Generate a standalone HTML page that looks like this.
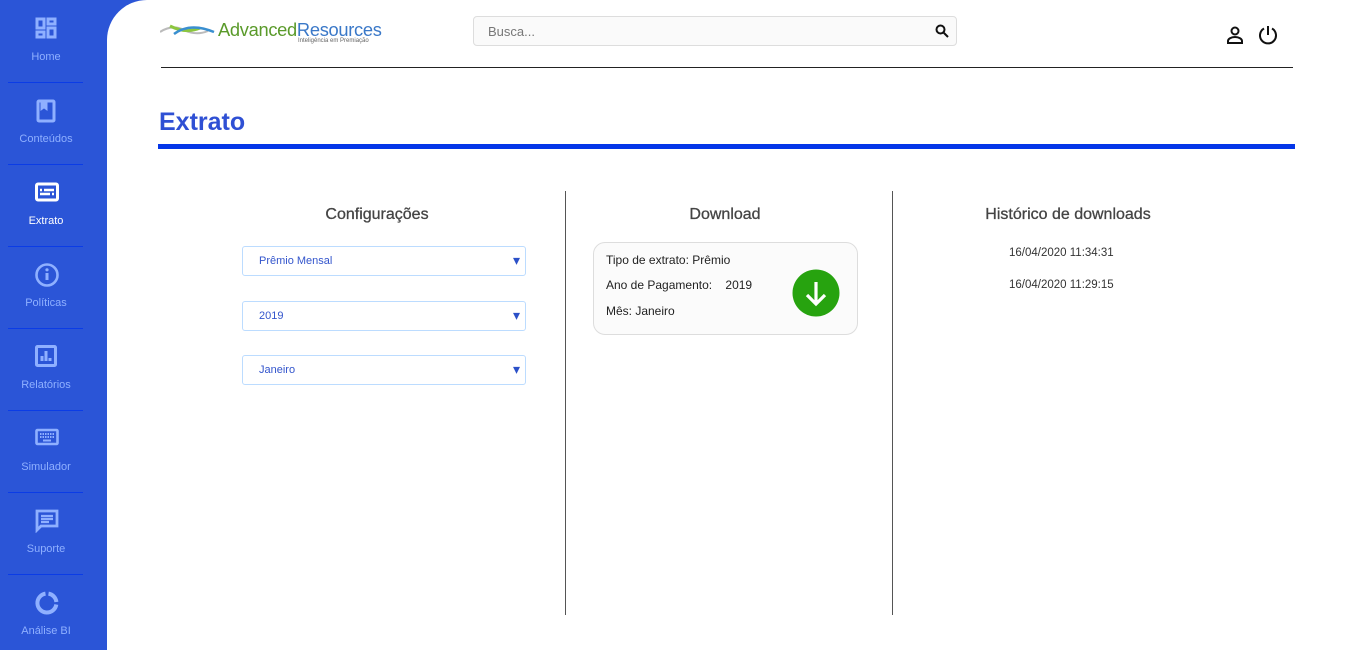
<!DOCTYPE html>
<html><head><meta charset="utf-8"><style>
*{margin:0;padding:0;box-sizing:border-box}
html,body{width:1358px;height:650px;overflow:hidden}
body{background:#2b55d7;font-family:"Liberation Sans",sans-serif;position:relative}
.side{position:absolute;left:0;top:0;width:107px;height:650px}
.item{position:absolute;left:0;width:92px;height:82px;text-align:center;color:#8fb0ff;font-size:11px}
.item svg{position:absolute;left:35px;top:17px}
.item span{position:absolute;left:0;width:92px;top:51px}
.item.act{color:#fff}
.sep{position:absolute;left:8px;width:75px;height:1px;background:#0b3ce6}
.main{position:absolute;left:107px;top:0;width:1251px;height:650px;background:#fff;border-top-left-radius:40px}
.abs{position:absolute}
.sel{position:absolute;left:242px;width:284px;height:30px;border:1px solid #bcdcff;border-radius:3px;color:#3355cc;font-size:11px;padding:8px 0 0 16px}
.sel:after{content:"▾";position:absolute;right:5px;top:5px;color:#2b50c8;font-size:14px}
h3{position:absolute;font-weight:normal;font-size:16px;color:#444;text-align:center;-webkit-text-stroke:0.3px #444}
</style></head><body>
<div class="side">
<div class="item" style="top:0"><svg width="22" height="22" viewBox="0 0 22 22" fill="none" stroke="#8fb0ff" stroke-width="3"><rect x="2" y="2" width="7" height="9"/><rect x="13" y="2" width="7" height="5"/><rect x="2" y="15" width="7" height="5"/><rect x="13" y="11" width="7" height="9"/></svg><span>Home</span></div>
<div class="sep" style="top:82px"></div>
<div class="item" style="top:82px"><svg width="22" height="24" viewBox="0 0 22 24" fill="none" stroke="#8fb0ff" stroke-width="3"><rect x="3" y="2" width="16" height="20" rx="1"/><path d="M7 2v7l2-1.5 2 1.5V2" fill="#8fb0ff"/></svg><span>Conteúdos</span></div>
<div class="sep" style="top:164px"></div>
<div class="item act" style="top:164px"><svg width="24" height="22" viewBox="0 0 24 22" fill="none" stroke="#fff" stroke-width="3"><rect x="1.5" y="3" width="21" height="16" rx="1.5"/><path d="M5 9h2M9 9h10M5 13h10M17 13h2" stroke-width="2.4"/></svg><span>Extrato</span></div>
<div class="sep" style="top:246px"></div>
<div class="item" style="top:246px"><svg width="24" height="24" viewBox="0 0 24 24" fill="none" stroke="#8fb0ff" stroke-width="2.6"><circle cx="12" cy="12" r="10.5"/><path d="M12 10v7" stroke-width="3"/><circle cx="12" cy="6.8" r="1.6" fill="#8fb0ff" stroke="none"/></svg><span>Políticas</span></div>
<div class="sep" style="top:328px"></div>
<div class="item" style="top:328px"><svg width="22" height="22" viewBox="0 0 22 22" fill="none" stroke="#8fb0ff" stroke-width="3"><rect x="1.5" y="1.5" width="19" height="19" rx="1"/><path d="M7 16v-5M11 16V6M15 16v-3" stroke-width="3"/></svg><span>Relatórios</span></div>
<div class="sep" style="top:410px"></div>
<div class="item" style="top:410px"><svg width="24" height="20" viewBox="0 0 24 20" fill="none" stroke="#8fb0ff" stroke-width="2.6"><rect x="1.5" y="3" width="21" height="14" rx="1"/><path d="M5 7h14M5 10h14" stroke-dasharray="1.5 1" stroke-width="2"/><path d="M8 13.5h8" stroke-width="2"/></svg><span>Simulador</span></div>
<div class="sep" style="top:492px"></div>
<div class="item" style="top:492px"><svg width="24" height="24" viewBox="0 0 24 24" fill="none" stroke="#8fb0ff" stroke-width="2.8"><path d="M2 2h20v15H6l-4 4z"/><path d="M6 7h12M6 10h12M6 13h8" stroke-width="2.2"/></svg><span>Suporte</span></div>
<div class="sep" style="top:574px"></div>
<div class="item" style="top:574px"><svg width="24" height="24" viewBox="0 0 24 24" fill="none" stroke="#8fb0ff" stroke-width="4"><path d="M13.5 2.6A9.5 9.5 0 0 1 21.4 11"/><path d="M21.3 13.5A9.5 9.5 0 1 1 10.5 2.6"/></svg><span>Análise BI</span></div>
</div>
<div class="main"></div>
<svg class="abs" style="left:160px;top:22px" width="62" height="16" viewBox="0 0 62 16"><path d="M0 10Q12 2 24 8T48 9" stroke="#bbb" stroke-width="2" fill="none"/><path d="M10 4Q26 12 40 6" stroke="#8cc63f" stroke-width="3" fill="none"/><path d="M14 12Q30 0 54 10" stroke="#3a8fd0" stroke-width="2.5" fill="none"/></svg>
<div class="abs" style="left:218px;top:19px;font-size:18.3px;color:#5a9a2a;letter-spacing:-0.3px">Advanced<span style="color:#3a78c8">Resources</span></div>
<div class="abs" style="left:298px;top:38px;font-size:6px;color:#666">Inteligência em Premiação</div>
<div class="abs" style="left:473px;top:16px;width:484px;height:30px;border:1px solid #ddd;border-radius:4px;background:#fafafa;font-size:13px;color:#777;padding:7px 0 0 14px">Busca...</div>
<svg class="abs" style="left:935px;top:24px" width="14" height="14" viewBox="0 0 14 14" fill="none" stroke="#111" stroke-width="2"><circle cx="5.5" cy="5.5" r="4"/><path d="M8.5 8.5L13 13"/></svg>
<svg class="abs" style="left:1226px;top:26px" width="18" height="18" viewBox="0 0 18 18" fill="none" stroke="#111" stroke-width="2"><circle cx="9" cy="5" r="3.5"/><path d="M2 17v-2c0-2 3-4 7-4s7 2 7 4v2z"/></svg>
<svg class="abs" style="left:1258px;top:25px" width="20" height="20" viewBox="0 0 20 20" fill="none" stroke="#111" stroke-width="2"><path d="M10 1v9"/><path d="M6 3.5A8 8 0 1 0 14 3.5"/></svg>
<div class="abs" style="left:161px;top:67px;width:1132px;height:1px;background:#222"></div>
<div class="abs" style="left:159px;top:108px;font-size:25px;font-weight:bold;color:#2f50d4">Extrato</div>
<div class="abs" style="left:158px;top:144px;width:1137px;height:5px;background:#0436e8"></div>
<div class="abs" style="left:565px;top:191px;width:1px;height:424px;background:#555"></div>
<div class="abs" style="left:892px;top:191px;width:1px;height:424px;background:#555"></div>
<h3 style="left:242px;width:270px;top:206px">Configurações</h3>
<h3 style="left:600px;width:250px;top:206px">Download</h3>
<h3 style="left:950px;width:236px;top:206px">Histórico de downloads</h3>
<div class="sel" style="top:246px">Prêmio Mensal</div>
<div class="sel" style="top:301px">2019</div>
<div class="sel" style="top:355px">Janeiro</div>
<div class="abs" style="left:593px;top:242px;width:265px;height:93px;border:1px solid #ddd;border-radius:12px;background:#fbfbfb;font-size:12px;color:#222">
<div class="abs" style="left:12px;top:10px">Tipo de extrato: Prêmio</div>
<div class="abs" style="left:12px;top:35px">Ano de Pagamento:&nbsp;&nbsp;&nbsp; 2019</div>
<div class="abs" style="left:12px;top:61px">Mês:&nbsp;Janeiro</div>
<svg class="abs" style="left:198px;top:26px" width="48" height="48" viewBox="0 0 48 48"><circle cx="24" cy="24" r="23.5" fill="#27a30f"/><path d="M24 13v21M15 26l9 9 9-9" stroke="#fff" stroke-width="3.2" fill="none"/></svg>
</div>
<div class="abs" style="left:1009px;top:247px;font-size:11.5px;color:#333">16/04/2020 11:34:31</div>
<div class="abs" style="left:1009px;top:279px;font-size:11.5px;color:#333">16/04/2020 11:29:15</div>
</body></html>
